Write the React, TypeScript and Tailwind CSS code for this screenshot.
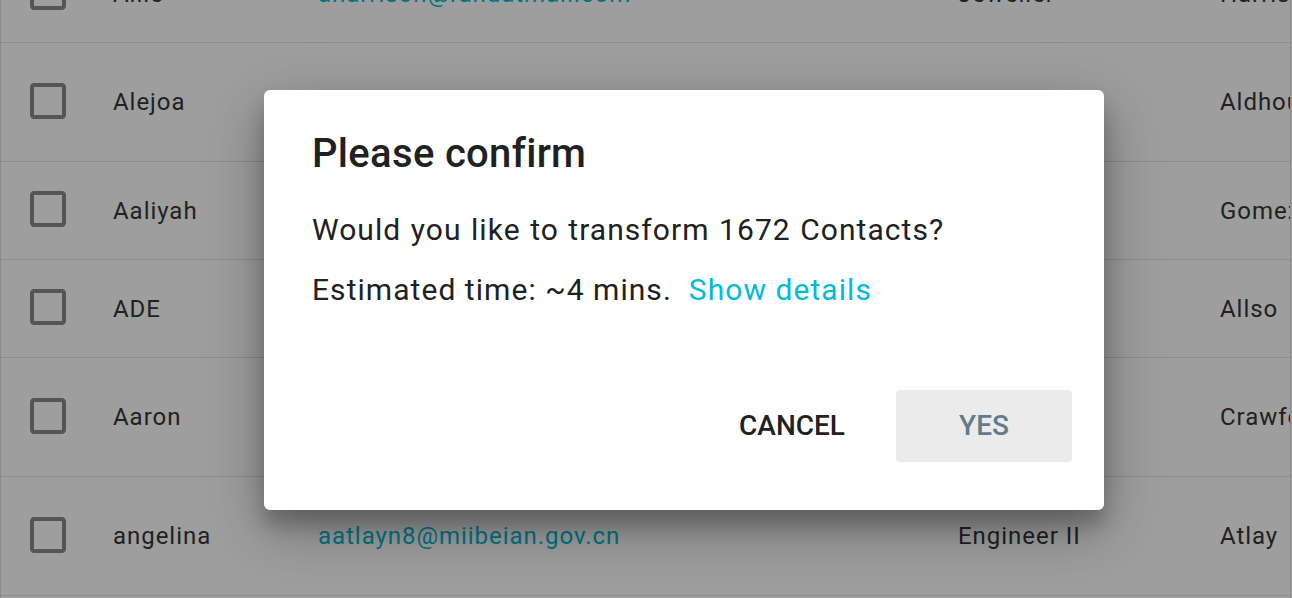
import React from "react";

type Row = { name: string; email: string; job: string; last: string; h: string };

const rows: Row[] = [
  { name: "Allie", email: "aharrison@randatmail.com", job: "Jeweller", last: "Harrison", h: "h-[98px]" },
  { name: "Alejoa", email: "aaldhouse1@rakuten.co.jp", job: "Accountant I", last: "Aldhouse", h: "h-[119px]" },
  { name: "Aaliyah", email: "agomez2@google.com.hk", job: "Analyst", last: "Gomez", h: "h-[98px]" },
  { name: "ADE", email: "aallso3@bandcamp.com", job: "Nurse", last: "Allso", h: "h-[98px]" },
  { name: "Aaron", email: "acrawford4@mozilla.org", job: "Developer", last: "Crawford", h: "h-[119px]" },
  { name: "angelina", email: "aatlayn8@miibeian.gov.cn", job: "Engineer II", last: "Atlay", h: "h-[119px]" },
  { name: "Abbey", email: "abbey9@example.com", job: "Designer", last: "Abbott", h: "h-[98px]" },
];

function CheckboxIcon() {
  return (
    <svg width="48" height="48" viewBox="0 0 24 24" className="-mt-[3px]">
      <path
        fill="#8a8a8a"
        d="M19 5v14H5V5h14m0-2H5c-1.11 0-2 .9-2 2v14c0 1.1.89 2 2 2h14c1.1 0 2-.9 2-2V5c0-1.1-.9-2-2-2z"
      />
    </svg>
  );
}

export default function App() {
  return (
    <div
      className="relative w-[1292px] h-[598px] overflow-hidden bg-white"
      style={{ fontFamily: "Roboto, 'Noto Sans', sans-serif" }}
    >
      <div className="w-[1291px] h-[598px] overflow-hidden border-l border-r border-[#e0e0e0]">
        <div className="-mt-[55px] w-[1600px]">
          {rows.map((r, i) => (
            <div
              key={i}
              className={`flex items-center ${r.h} border-b border-[#e0e0e0] text-[24px] tracking-[0.04em] text-[#363636]`}
            >
              <div className="w-[112px] pl-[23px] flex items-center shrink-0">
                <CheckboxIcon />
              </div>
              <div className="w-[205px] shrink-0 whitespace-nowrap overflow-hidden">{r.name}</div>
              <div className="w-[640px] shrink-0 whitespace-nowrap text-[#00bcd4]">{r.email}</div>
              <div className="w-[262px] shrink-0 whitespace-nowrap">{r.job}</div>
              <div className="w-[300px] shrink-0 whitespace-nowrap">{r.last}</div>
            </div>
          ))}
        </div>
      </div>

      <div className="absolute inset-0 bg-black/[0.38]" />

      <div className="absolute left-[264px] top-[90px] w-[840px] h-[420px] bg-white rounded-[6px] shadow-[0_19px_60px_rgba(0,0,0,0.30),0_15px_20px_rgba(0,0,0,0.22)] flex flex-col">
        <div className="pl-[48px] pt-[40px] text-[40px] leading-[48px] font-medium tracking-[0.008em] text-[#212121]">
          Please confirm
        </div>
        <div className="pl-[48px] mt-[22px] text-[30px] leading-[60px] tracking-[0.035em] text-[#212121]">
          <div className="[word-spacing:1px]">Would you like to transform 1672 Contacts?</div>
          <div>
            Estimated time: ~4 mins.
            <span className="ml-[17px] text-[#00bcd4]">Show details</span>
          </div>
        </div>
        <div className="mt-auto flex justify-end gap-[16px] pr-[32px] pb-[48px]">
          <button className="w-[176px] h-[72px] rounded-[4px] text-[28px] font-medium text-[#212121] flex items-center justify-center">
            CANCEL
          </button>
          <button className="w-[176px] h-[72px] rounded-[4px] bg-[#ebebeb] text-[28px] font-medium text-[#607d8b] flex items-center justify-center">
            YES
          </button>
        </div>
      </div>
    </div>
  );
}
